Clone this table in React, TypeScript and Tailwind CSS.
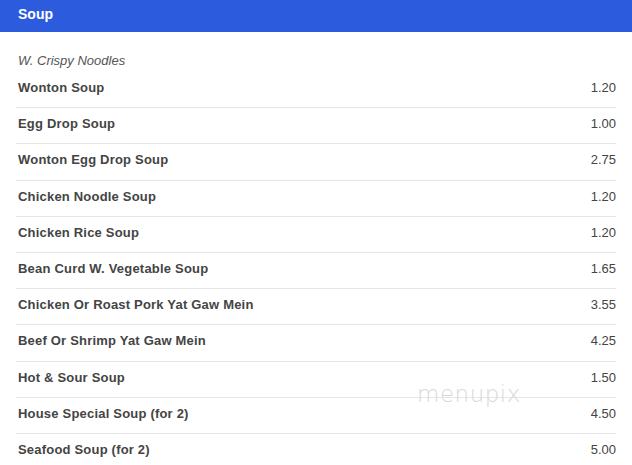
const items = [
  { name: "Wonton Soup", price: "1.20" },
  { name: "Egg Drop Soup", price: "1.00" },
  { name: "Wonton Egg Drop Soup", price: "2.75" },
  { name: "Chicken Noodle Soup", price: "1.20" },
  { name: "Chicken Rice Soup", price: "1.20" },
  { name: "Bean Curd W. Vegetable Soup", price: "1.65" },
  { name: "Chicken Or Roast Pork Yat Gaw Mein", price: "3.55" },
  { name: "Beef Or Shrimp Yat Gaw Mein", price: "4.25" },
  { name: "Hot & Sour Soup", price: "1.50" },
  { name: "House Special Soup (for 2)", price: "4.50" },
  { name: "Seafood Soup (for 2)", price: "5.00" },
];

export default function App() {
  return (
    <div className="relative h-[465px] w-[632px] overflow-hidden bg-white font-['Liberation_Sans',Arial,sans-serif]">
      <div className="flex h-8 items-start bg-[#2d5bdd] px-[18px] pt-[5px]">
        <h2 className="text-[14px] font-bold leading-[18px] text-white">Soup</h2>
      </div>
      <div className="px-4 pt-[21px]">
        <p className="pl-[2px] text-[13px] italic leading-4 text-[#555]">W. Crispy Noodles</p>
        <ul className="mt-[3px]">
          {items.map((item, i) => (
            <li
              key={item.name}
              className={
                "flex items-center justify-between pl-[2px] pt-[8px] pb-[11.2px] text-[13px] leading-4 text-[#444] " +
                (i > 0 ? "border-t border-[#e6e6e6]" : "")
              }
            >
              <span className="font-bold tracking-[0.2px]">{item.name}</span>
              <span>{item.price}</span>
            </li>
          ))}
        </ul>
      </div>
      <div className="absolute left-[417px] top-[383px] font-['DejaVu_Sans',sans-serif] text-[23px] font-extralight leading-none tracking-[0.5px] text-[#d9d9d9]">
        menupix
      </div>
    </div>
  );
}
